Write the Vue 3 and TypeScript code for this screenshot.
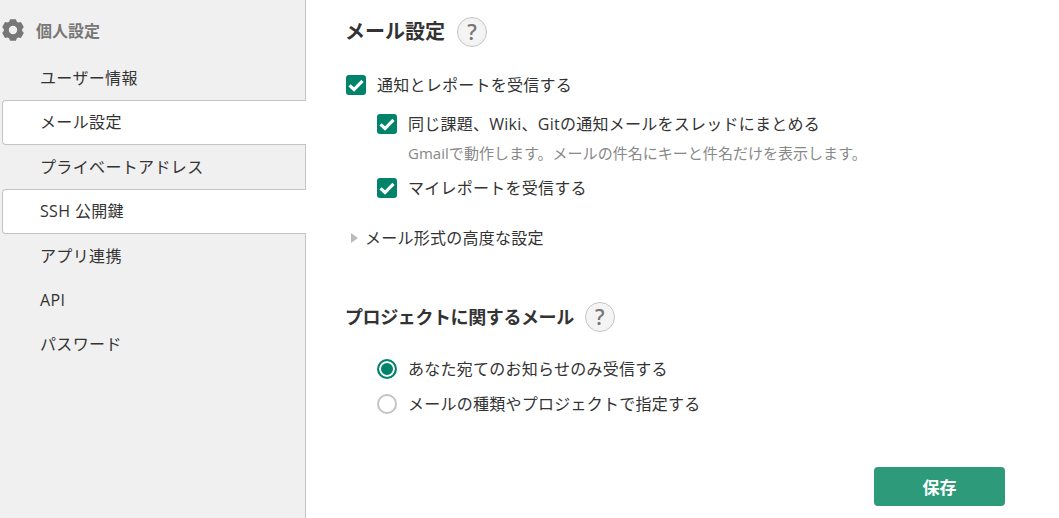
<script setup lang="ts">
const menu = [
  { label: 'ユーザー情報', active: false },
  { label: 'メール設定', active: true },
  { label: 'プライベートアドレス', active: false },
  { label: 'SSH 公開鍵', active: true },
  { label: 'アプリ連携', active: false },
  { label: 'API', active: false },
  { label: 'パスワード', active: false },
]

function gearPath(): string {
  const pts: string[] = []
  const at = (deg: number, r: number) => {
    const a = (deg * Math.PI) / 180
    return `${(12 + r * Math.cos(a)).toFixed(2)} ${(12 + r * Math.sin(a)).toFixed(2)}`
  }
  for (let i = 0; i < 6; i++) {
    const c = i * 60 - 90
    pts.push(at(c - 25, 9.2), at(c - 15, 11.2), at(c + 15, 11.2), at(c + 25, 9.2))
  }
  return `M${pts.join('L')}Z M16.200 12a4.200 4.200 0 1 0-8.400 0 4.200 4.200 0 0 0 8.400 0Z`
}
const gear = gearPath()
</script>

<template>
  <div class="page">
    <aside class="side">
      <div class="side-head">
        <svg class="gear" viewBox="0 0 24 24" width="24" height="24">
          <path fill="#777" fill-rule="evenodd" :d="gear" />
        </svg>
        <span>個人設定</span>
      </div>
      <ul class="menu">
        <li v-for="item in menu" :key="item.label" class="menu-item" :class="{ active: item.active }">{{ item.label }}</li>
      </ul>
    </aside>
    <main class="main">
      <div class="title-row first">
        <h2>メール設定</h2>
        <span class="help">?</span>
      </div>
      <div class="check-row top">
        <span class="box"><svg viewBox="0 0 20 20" width="20" height="20"><path d="M3.500 10.300l4.500 4.200 8.500-8.600" fill="none" stroke="#fff" stroke-width="3.200" /></svg></span>
        <span>通知とレポートを受信する</span>
      </div>
      <div class="nested">
        <div class="check-row">
          <span class="box"><svg viewBox="0 0 20 20" width="20" height="20"><path d="M3.500 10.300l4.500 4.200 8.500-8.600" fill="none" stroke="#fff" stroke-width="3.200" /></svg></span>
          <span>同じ課題、Wiki、Gitの通知メールをスレッドにまとめる</span>
        </div>
        <p class="hint">Gmailで動作します。メールの件名にキーと件名だけを表示します。</p>
        <div class="check-row">
          <span class="box"><svg viewBox="0 0 20 20" width="20" height="20"><path d="M3.500 10.300l4.500 4.200 8.500-8.600" fill="none" stroke="#fff" stroke-width="3.200" /></svg></span>
          <span>マイレポートを受信する</span>
        </div>
      </div>
      <div class="advanced">
        <span class="tri"></span>
        <span>メール形式の高度な設定</span>
      </div>
      <div class="title-row second">
        <h3>プロジェクトに関するメール</h3>
        <span class="help">?</span>
      </div>
      <div class="radios">
        <div class="radio-row">
          <span class="radio on"></span>
          <span>あなた宛てのお知らせのみ受信する</span>
        </div>
        <div class="radio-row">
          <span class="radio"></span>
          <span>メールの種類やプロジェクトで指定する</span>
        </div>
      </div>
      <div class="actions">
        <button class="save" type="button">保存</button>
      </div>
    </main>
  </div>
</template>

<style>
html, body { margin: 0; background: #fff; }
</style>

<style scoped>
.page {
  display: flex;
  width: 1059px;
  height: 518px;
  overflow: hidden;
  font-family: "Open Sans", "Noto Sans CJK JP", sans-serif;
  font-size: 16px;
  color: #333;
}
.side {
  width: 305px;
  flex: none;
  background: #f0f0f0;
  border-right: 1px solid #c4c4c4;
}
.side-head {
  display: flex;
  align-items: center;
  height: 24px;
  margin-top: 18px;
  padding-left: 1px;
  gap: 11px;
  font-size: 16px;
  font-weight: 700;
  color: #777;
}
.menu {
  list-style: none;
  margin: 14px 0 0 2px;
  padding: 0;
}
.menu-item {
  height: 44.400px;
  box-sizing: border-box;
  padding-left: 37px;
  line-height: 42px;
  letter-spacing: 0.35px;
  border: 1px solid transparent;
  border-right: 0;
  margin-right: -1px;
  white-space: nowrap;
}
.menu-item.active {
  background: #fff;
  border-color: #c4c4c4;
  border-radius: 4px 0 0 4px;
}
.main {
  flex: 1;
  min-width: 0;
  padding-left: 39px;
  display: flex;
  flex-direction: column;
}
.title-row {
  display: flex;
  align-items: center;
  gap: 12px;
  color: #333;
}
.title-row.first { margin-top: 17px; height: 30px; }
.title-row.second { margin-top: 52px; height: 30px; gap: 11px; }
h2, h3 { margin: 0; font-weight: 700; line-height: 30px; }
h2 { font-size: 20px; }
h3 { font-size: 18px; letter-spacing: -0.4px; }
.help {
  width: 28px;
  height: 28px;
  border: 1px solid #c4c4c4;
  border-radius: 50%;
  background: #f4f4f4;
  color: #777;
  font-size: 21px;
  font-weight: 600;
  line-height: 28px;
  text-align: center;
  font-family: "Open Sans", sans-serif;
}
.check-row {
  display: flex;
  align-items: center;
  gap: 11px;
  height: 24px;
  line-height: 24px;
  letter-spacing: 0.25px;
}
.check-row.top { margin-top: 26px; margin-left: 1px; }
.box {
  width: 20px;
  height: 20px;
  border-radius: 3px;
  background: #00836b;
  flex: none;
  display: block;
}
.box svg { display: block; }
.nested {
  padding-left: 32px;
  margin-top: 15px;
}
.hint {
  margin: 7px 0 13px 31px;
  font-size: 15px;
  line-height: 20px;
  letter-spacing: 0.03px;
  color: #888;
}
.advanced {
  display: flex;
  align-items: center;
  gap: 7px;
  margin-top: 26px;
  margin-left: 6px;
  height: 24px;
  line-height: 24px;
  letter-spacing: 0.25px;
}
.tri {
  width: 0;
  height: 0;
  border-left: 7px solid #bbb;
  border-top: 5px solid transparent;
  border-bottom: 5px solid transparent;
}
.radios {
  margin-top: 25px;
  padding-left: 32px;
  display: flex;
  flex-direction: column;
  gap: 11px;
}
.radio-row {
  display: flex;
  align-items: center;
  gap: 11px;
  height: 24px;
  line-height: 24px;
  letter-spacing: 0.25px;
}
.radio {
  width: 20px;
  height: 20px;
  box-sizing: border-box;
  border: 2px solid #c4c4c4;
  border-radius: 50%;
  background: #fff;
  flex: none;
}
.radio.on {
  border-color: #00836b;
  background: #00836b;
  box-shadow: inset 0 0 0 2px #fff;
}
.actions {
  display: flex;
  justify-content: flex-end;
  margin-top: 51px;
  padding-right: 54px;
}
.save {
  width: 131px;
  height: 39px;
  border: 0;
  border-radius: 4px;
  background: #2d9a79;
  color: #fff;
  font-family: inherit;
  font-size: 17px;
  font-weight: 700;
}
</style>
